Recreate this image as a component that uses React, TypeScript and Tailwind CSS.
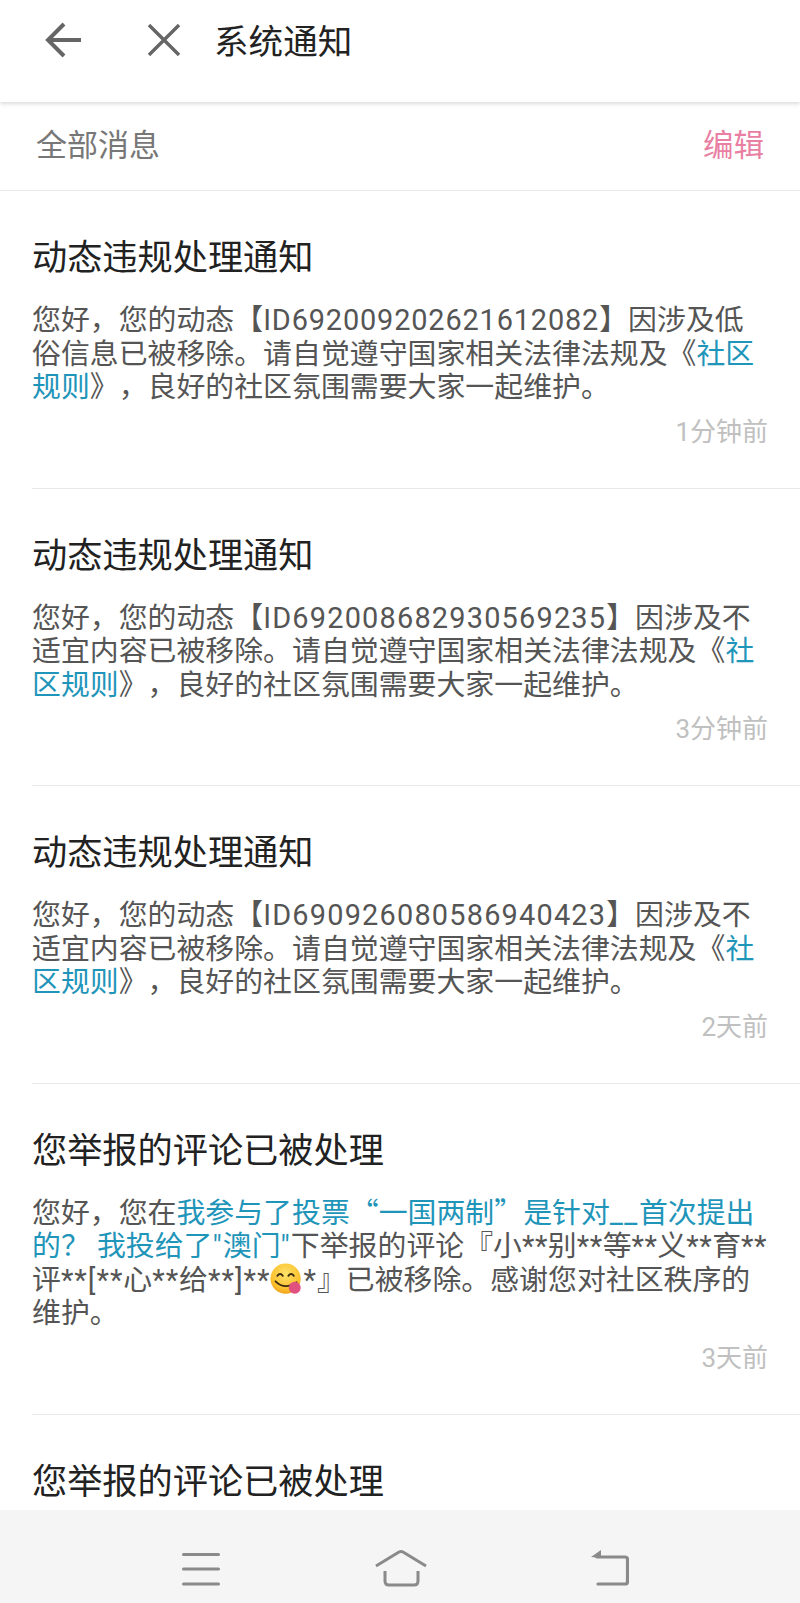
import React from "react";

function L({ children }: { children: React.ReactNode }) {
  return <span className="text-[#1f95ba]">{children}</span>;
}

function Q({ children }: { children: React.ReactNode }) {
  return <span className="leading-[0] [font-family:'Noto_Sans_CJK_SC',sans-serif]">{children}</span>;
}

function Id({ children }: { children: React.ReactNode }) {
  return <span className="tracking-[0.85px]">{children}</span>;
}

function IdWide({ children }: { children: React.ReactNode }) {
  return <span className="tracking-[1.2px]">{children}</span>;
}

function S({ children }: { children: React.ReactNode }) {
  return <span className="tracking-[1px]">{children}</span>;
}

function T({ children }: { children: React.ReactNode }) {
  return <span className="tracking-[0.5px]">{children}</span>;
}

function Emoji() {
  return (
    <svg viewBox="0 0 36 36" className="inline-block w-[33px] h-[33px] -mt-[13px] -mb-[6px] align-baseline">
      <defs>
        <radialGradient id="f" cx="50%" cy="35%" r="70%">
          <stop offset="0%" stopColor="#ffe36a" />
          <stop offset="70%" stopColor="#fbc02d" />
          <stop offset="100%" stopColor="#ee9a1a" />
        </radialGradient>
      </defs>
      <circle cx="17" cy="17" r="16.500" fill="url(#f)" />
      <path d="M8 14q3-4 6 0M20 14q3-4 6 0" fill="none" stroke="#3b2a14" strokeWidth="2" strokeLinecap="round" />
      <path d="M6 20q10 10 23 1" fill="none" stroke="#3b2a14" strokeWidth="2" strokeLinecap="round" />
      <circle cx="27" cy="27" r="6.500" fill="#e0517f" />
    </svg>
  );
}

function Item({ title, lines, time }: { title: string; lines: React.ReactNode[]; time: string }) {
  return (
    <div className="ml-[32px] border-b border-[#e9e9e9] pt-[47px] pb-[38px]">
      <div className="text-[35.2px] leading-[40px] text-[#222]">{title}</div>
      <div className="mt-[26px] text-[28.9px] leading-[33.5px] text-[#555] whitespace-nowrap">
        {lines.map((l, i) => (
          <div key={i}>{l}</div>
        ))}
      </div>
      <div className="mt-[10px] pr-[32px] text-right text-[26px] leading-[35px] text-[#c0c0c0]">{time}</div>
    </div>
  );
}

export default function App() {
  return (
    <div className="w-[800px] h-[1603px] flex flex-col overflow-hidden bg-white [font-family:Roboto,'Noto_Sans_CJK_SC',sans-serif] [text-spacing-trim:space-all]">
      <header className="relative z-10 h-[102px] shrink-0 flex items-start bg-white shadow-[0_2px_4px_rgba(0,0,0,0.14)]">
        <svg viewBox="0 0 36 36" className="ml-[45px] mt-[22px] w-[36px] h-[36px]" fill="none" stroke="#666" strokeWidth="4">
          <path d="M36 18H3" />
          <path d="M19 2L3 18l16 16" />
        </svg>
        <svg viewBox="0 0 32 32" className="ml-[67px] mt-[24px] w-[32px] h-[32px]" fill="none" stroke="#666" strokeWidth="3.4">
          <path d="M1 1l30 30M31 1L1 31" />
        </svg>
        <div className="ml-[34px] mt-[21px] text-[34.6px] leading-[42px] text-[#222]">系统通知</div>
      </header>
      <div className="h-[89px] shrink-0 flex items-center justify-between pl-[36px] pr-[36px] border-b border-[#e9e9e9]">
        <span className="text-[31px] text-[#777]">全部消息</span>
        <span className="text-[30.5px] text-[#e97fa3]">编辑</span>
      </div>
      <main className="flex-1 min-h-0 overflow-hidden">
        <Item
          title="动态违规处理通知"
          lines={[
            <>您好，您的动态【<Id>ID692009202621612082</Id>】因涉及低</>,
            <>俗信息已被移除。请自觉遵守国家相关法律法规及《<L>社区</L></>,
            <><L>规则</L>》，良好的社区氛围需要大家一起维护。</>,
          ]}
          time="1分钟前"
        />
        <Item
          title="动态违规处理通知"
          lines={[
            <>您好，您的动态【<IdWide>ID692008682930569235</IdWide>】因涉及不</>,
            <>适宜内容已被移除。请自觉遵守国家相关法律法规及《<L>社</L></>,
            <><L>区规则</L>》，良好的社区氛围需要大家一起维护。</>,
          ]}
          time="3分钟前"
        />
        <Item
          title="动态违规处理通知"
          lines={[
            <>您好，您的动态【<IdWide>ID690926080586940423</IdWide>】因涉及不</>,
            <>适宜内容已被移除。请自觉遵守国家相关法律法规及《<L>社</L></>,
            <><L>区规则</L>》，良好的社区氛围需要大家一起维护。</>,
          ]}
          time="2天前"
        />
        <Item
          title="您举报的评论已被处理"
          lines={[
            <>您好，您在<L>我参与了投票<Q>“</Q>一国两制<Q>”</Q>是针对<span className="tracking-[1.5px]">__</span>首次提出</L></>,
            <><L>的？ 我投给了<S>"</S>澳门<S>"</S></L>下举报的评论『小<T>**</T>别<T>**</T>等<T>**</T>义<T>**</T>育<T>**</T></>,
            <>评<S>**[**</S>心<S>**</S>给<S>**]**</S><Emoji /><S>*</S>』已被移除。感谢您对社区秩序的</>,
            "维护。",
          ]}
          time="3天前"
        />
        <div className="ml-[32px] pt-[47px] text-[35.2px] leading-[40px] text-[#222]">您举报的评论已被处理</div>
      </main>
      <nav className="h-[93px] shrink-0 bg-[#f5f5f5] flex items-start">
        <svg viewBox="0 0 38 35" className="ml-[182px] mt-[42px] w-[38px] h-[35px]" fill="none" stroke="#8a8a8a" strokeWidth="3" strokeLinecap="round">
          <path d="M1.500 2.500h35M1.500 17h35M1.500 32h35" />
        </svg>
        <svg viewBox="0 0 52 38" className="ml-[155px] mt-[39px] w-[52px] h-[38px]" fill="none" stroke="#8a8a8a" strokeWidth="3" strokeLinejoin="round">
          <path d="M1 17L24 3q2-1 4 0l23 14" />
          <path d="M10 22v10q0 4 4 4h25q4 0 4-4V22" />
        </svg>
        <svg viewBox="0 0 38 36" className="ml-[164px] mt-[40px] w-[38px] h-[36px]" fill="none" stroke="#8a8a8a" strokeWidth="3.2" strokeLinecap="round">
          <path d="M6 7h28q2.500 0 2.500 2.500v22q0 2.500-2.500 2.500H7" />
          <path d="M0 7L10 0v8z" fill="#8a8a8a" stroke="none" />
        </svg>
      </nav>
    </div>
  );
}
